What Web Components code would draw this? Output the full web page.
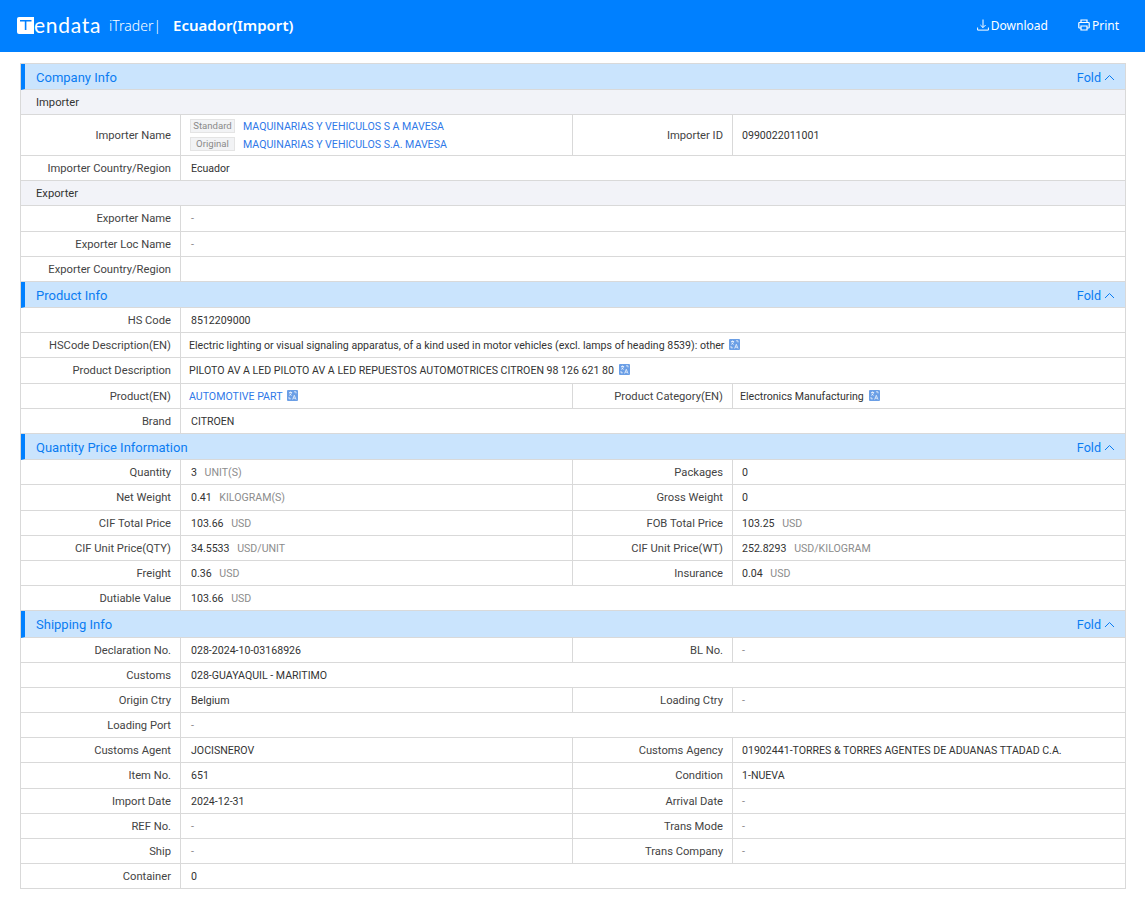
<!DOCTYPE html>
<html>
<head>
<meta charset="utf-8">
<title>Ecuador(Import)</title>
<style>
  body { margin: 0; background: #fff; font-family: Roboto, "Liberation Sans", sans-serif; }
</style>
</head>
<body>
<top-bar heading="Ecuador(Import)"></top-bar>
<detail-page>
  <info-section heading="Company Info">
    <sub-head>Importer</sub-head>
    <info-row h="41" label="Importer Name" half>
      <name-pair></name-pair>
      <span slot="label2">Importer ID</span><span slot="value2">0990022011001</span>
    </info-row>
    <info-row label="Importer Country/Region">Ecuador</info-row>
    <sub-head>Exporter</sub-head>
    <info-row h="26" label="Exporter Name"><i-dash></i-dash></info-row>
    <info-row label="Exporter Loc Name"><i-dash></i-dash></info-row>
    <info-row label="Exporter Country/Region"></info-row>
  </info-section>
  <info-section heading="Product Info">
    <info-row label="HS Code">8512209000</info-row>
    <info-row label="HSCode Description(EN)" tight>Electric lighting or visual signaling apparatus, of a kind used in motor vehicles (excl. lamps of heading 8539): other<translate-icon></translate-icon></info-row>
    <info-row h="26" label="Product Description" tight>PILOTO AV A LED PILOTO AV A LED REPUESTOS AUTOMOTRICES CITROEN 98 126 621 80<translate-icon></translate-icon></info-row>
    <info-row label="Product(EN)" half tight>
      <link-text>AUTOMOTIVE PART</link-text><translate-icon></translate-icon>
      <span slot="label2">Product Category(EN)</span><span slot="value2">Electronics Manufacturing<translate-icon></translate-icon></span>
    </info-row>
    <info-row label="Brand">CITROEN</info-row>
  </info-section>
  <info-section heading="Quantity Price Information">
    <info-row label="Quantity" half>3<u-nit>UNIT(S)</u-nit>
      <span slot="label2">Packages</span><span slot="value2">0</span></info-row>
    <info-row h="26" label="Net Weight" half>0.41<u-nit>KILOGRAM(S)</u-nit>
      <span slot="label2">Gross Weight</span><span slot="value2">0</span></info-row>
    <info-row label="CIF Total Price" half>103.66<u-nit>USD</u-nit>
      <span slot="label2">FOB Total Price</span><span slot="value2">103.25<u-nit>USD</u-nit></span></info-row>
    <info-row label="CIF Unit Price(QTY)" half>34.5533<u-nit>USD/UNIT</u-nit>
      <span slot="label2">CIF Unit Price(WT)</span><span slot="value2">252.8293<u-nit>USD/KILOGRAM</u-nit></span></info-row>
    <info-row label="Freight" half>0.36<u-nit>USD</u-nit>
      <span slot="label2">Insurance</span><span slot="value2">0.04<u-nit>USD</u-nit></span></info-row>
    <info-row label="Dutiable Value">103.66<u-nit>USD</u-nit></info-row>
  </info-section>
  <info-section heading="Shipping Info" h="27">
    <info-row label="Declaration No." half>028-2024-10-03168926
      <span slot="label2">BL No.</span><span slot="value2"><i-dash></i-dash></span></info-row>
    <info-row label="Customs">028-GUAYAQUIL - MARITIMO</info-row>
    <info-row label="Origin Ctry" half>Belgium
      <span slot="label2">Loading Ctry</span><span slot="value2"><i-dash></i-dash></span></info-row>
    <info-row label="Loading Port"><i-dash></i-dash></info-row>
    <info-row label="Customs Agent" half>JOCISNEROV
      <span slot="label2">Customs Agency</span><span slot="value2">01902441-TORRES &amp; TORRES AGENTES DE ADUANAS TTADAD C.A.</span></info-row>
    <info-row h="26" label="Item No." half>651
      <span slot="label2">Condition</span><span slot="value2">1-NUEVA</span></info-row>
    <info-row label="Import Date" half>2024-12-31
      <span slot="label2">Arrival Date</span><span slot="value2"><i-dash></i-dash></span></info-row>
    <info-row label="REF No." half><i-dash></i-dash>
      <span slot="label2">Trans Mode</span><span slot="value2"><i-dash></i-dash></span></info-row>
    <info-row label="Ship" half><i-dash></i-dash>
      <span slot="label2">Trans Company</span><span slot="value2"><i-dash></i-dash></span></info-row>
    <info-row label="Container">0</info-row>
  </info-section>
</detail-page>
<script>
const FONT = 'Roboto, "Liberation Sans", sans-serif';
const BAR_FONT = '"Noto Sans", "Liberation Sans", sans-serif';

class TopBar extends HTMLElement {
  constructor() {
    super();
    this.attachShadow({ mode: 'open' }).innerHTML = `
      <style>
        :host { display: flex; align-items: center; height: 52px; background: #0080ff; color: #fff; font-family: ${BAR_FONT}; padding: 0 26px 2px 17px; box-sizing: border-box; }
        .logo { display: flex; align-items: center; }
        .word { font-family: Lato, ${BAR_FONT}; font-size: 21px; letter-spacing: 0.7px; line-height: 20px; }
        .trader { font-size: 14px; margin-left: 8px; font-weight: 300; }
        h1 { font-size: 15px; font-weight: 600; margin: 0 0 0 12px; }
        .acts { margin-left: auto; display: flex; gap: 30px; font-size: 12px; }
        .acts span { display: flex; align-items: center; gap: 2px; }
        svg { display: block; }
      </style>
      <div class="logo">
        <svg width="17" height="17" viewBox="0 0 17 17"><path fill="#fff" d="M2 0h15v17H2a2 2 0 0 1-2-2V2a2 2 0 0 1 2-2z"/><path fill="#0080ff" d="M3 3h11.5v1.4H9.4V13H7.8V4.4H3z"/></svg>
        <span class="word">endata</span>
      </div>
      <span class="trader">iTrader|</span>
      <h1>${this.getAttribute('heading')}</h1>
      <div class="acts">
        <span><svg width="12" height="12" viewBox="0 0 12 12" fill="none" stroke="#fff" stroke-width="1"><path d="M6 .5v8M3.4 6 6 8.6 8.6 6M.6 8.5v2.6h10.8V8.5"/></svg>Download</span>
        <span><svg width="12" height="12" viewBox="0 0 12 12" fill="none" stroke="#fff" stroke-width="1.2"><path d="M3 3.5V1h6v2.5M3 9H1.6a.8.8 0 0 1-.8-.8V4.3a.8.8 0 0 1 .8-.8h8.8a.8.8 0 0 1 .8.8v3.9a.8.8 0 0 1-.8.8H9M3 7h6v4H3z"/></svg>Print</span>
      </div>`;
  }
}

class DetailPage extends HTMLElement {
  constructor() {
    super();
    this.attachShadow({ mode: 'open' }).innerHTML = `
      <style>
        :host { display: block; margin: 11px 19px 0 20px; border: 1px solid #d9d9d9; border-bottom: 0; font-family: ${FONT}; font-size: 10.6px; color: #333; }
      </style>
      <slot></slot>`;
  }
}

class InfoSection extends HTMLElement {
  constructor() {
    super();
    this.attachShadow({ mode: 'open' }).innerHTML = `
      <style>
        :host { display: block; }
        .head { display: flex; align-items: center; justify-content: space-between; height: ${this.getAttribute('h') || 26}px; box-sizing: border-box; background: #cae4fd; border-left: 4px solid #0080ff; border-bottom: 1px solid #d9d9d9; padding: 0 10px 0 11px; color: #0a7cf2; font-size: 13px; }
        .title { padding-top: 1px; }
        .fold { display: flex; align-items: center; gap: 3px; font-size: 12.6px; padding-top: 1px; }
        svg { display: block; }
      </style>
      <div class="head">
        <span class="title">${this.getAttribute('heading')}</span>
        <span class="fold">Fold<svg width="11" height="7" viewBox="0 0 11 7" fill="none" stroke="#0a7cf2"><path d="M1 6l4.5-4.5L10 6"/></svg></span>
      </div>
      <slot></slot>`;
  }
}

class SubHead extends HTMLElement {
  constructor() {
    super();
    this.attachShadow({ mode: 'open' }).innerHTML = `
      <style>
        :host { display: flex; align-items: center; height: 25px; box-sizing: border-box; background: #f2f3f8; border-bottom: 1px solid #d9d9d9; padding-left: 15px; color: #333; font-size: 11.2px; }
      </style>
      <slot></slot>`;
  }
}

class InfoRow extends HTMLElement {
  constructor() {
    super();
    const half = this.hasAttribute('half');
    const tight = this.hasAttribute('tight') ? 8 : 10;
    const h = this.getAttribute('h') || 25;
    this.attachShadow({ mode: 'open' }).innerHTML = `
      <style>
        :host { display: grid; grid-template-columns: ${half ? '160px 392px 160px 1fr' : '160px 1fr'}; height: ${h}px; box-sizing: border-box; border-bottom: 1px solid #d9d9d9; }
        .l, .v { display: flex; align-items: center; min-width: 0; }
        .l { justify-content: flex-end; padding-right: 9px; color: #444; font-size: 11.2px; border-right: 1px solid #d9d9d9; box-sizing: border-box; }
        .v { padding-left: ${tight}px; }
        .v.mid { border-right: 1px solid #d9d9d9; box-sizing: border-box; }
        .v.r { padding-left: ${tight === 8 ? 7 : 9}px; }
      </style>
      <div class="l">${this.getAttribute('label')}</div>
      <div class="v ${half ? 'mid' : ''}"><div><slot></slot></div></div>
      ${half ? `<div class="l"><slot name="label2"></slot></div><div class="v r"><div><slot name="value2"></slot></div></div>` : ''}`;
  }
}

class LinkText extends HTMLElement {
  constructor() {
    super();
    this.attachShadow({ mode: 'open' }).innerHTML = `
      <style>:host { color: #2f78e8; }</style><slot></slot>`;
  }
}

class NamePair extends HTMLElement {
  constructor() {
    super();
    this.attachShadow({ mode: 'open' }).innerHTML = `
      <style>
        :host { display: grid; grid-template-columns: 45px auto; column-gap: 8px; row-gap: 4px; align-items: center; margin-left: -1px; }
        .tag { background: #f2f3f5; border: 1px solid #e4e4e4; color: #8a8a8a; font-size: 9.6px; height: 12px; line-height: 12px; text-align: center; }
        a { color: #2f78e8; }
      </style>
      <span class="tag">Standard</span><a>MAQUINARIAS Y VEHICULOS S A MAVESA</a>
      <span class="tag">Original</span><a>MAQUINARIAS Y VEHICULOS S.A. MAVESA</a>`;
  }
}

class TranslateIcon extends HTMLElement {
  constructor() {
    super();
    this.attachShadow({ mode: 'open' }).innerHTML = `
      <style>
        :host { display: inline-block; vertical-align: -1px; margin-left: 5px; width: 11px; height: 11px; }
        svg { display: block; }
      </style>
      <svg width="11" height="11" viewBox="0 0 11 11"><rect width="11" height="11" rx="1" fill="#6b9fe6"/><path d="M2 2.5h3M3.5 1.5v1M2.3 5.5c1.2-.6 2-1.6 2.4-3M2.6 3.6c.4.8 1 1.5 2 1.9M5.6 9.5l1.7-4.2 1.7 4.2M6.3 8.2h2M7 1.8h2v1.6M2 7v1.8h1.8" fill="none" stroke="#fff" stroke-width=".7"/></svg>`;
  }
}

class Unit extends HTMLElement {
  constructor() {
    super();
    this.attachShadow({ mode: 'open' }).innerHTML = `
      <style>:host { color: #8c8c8c; margin-left: 5px; }</style><slot></slot>`;
  }
}

class Dash extends HTMLElement {
  constructor() {
    super();
    this.attachShadow({ mode: 'open' }).innerHTML = `
      <style>:host { color: #888; }</style>-`;
  }
}

customElements.define('top-bar', TopBar);
customElements.define('detail-page', DetailPage);
customElements.define('info-section', InfoSection);
customElements.define('sub-head', SubHead);
customElements.define('info-row', InfoRow);
customElements.define('link-text', LinkText);
customElements.define('name-pair', NamePair);
customElements.define('translate-icon', TranslateIcon);
customElements.define('u-nit', Unit);
customElements.define('i-dash', Dash);
</script>
</body>
</html>
